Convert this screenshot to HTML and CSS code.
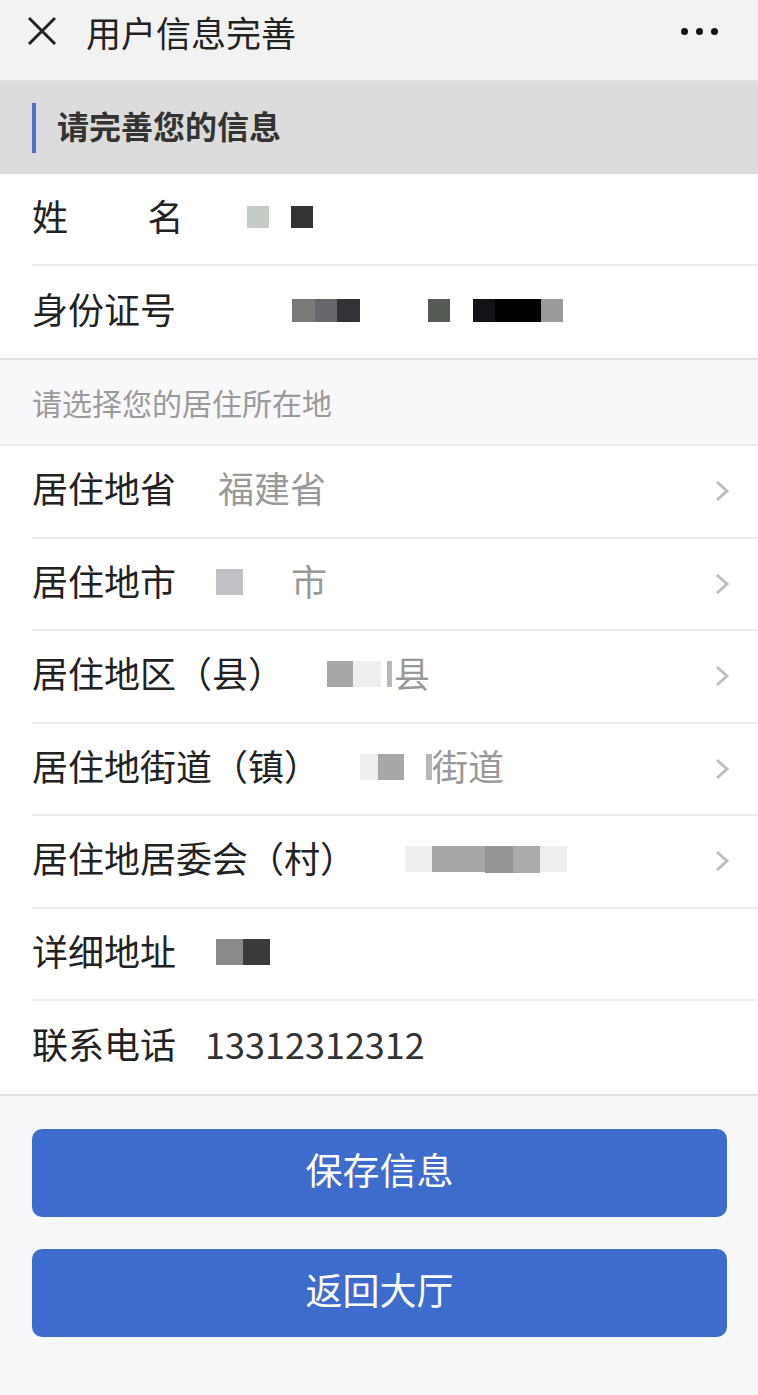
FILE: index.html
```html
<!DOCTYPE html>
<html lang="zh-CN">
<head>
<meta charset="utf-8">
<title>用户信息完善</title>
<link rel="stylesheet" href="styles.css">
</head>
<body>
<header class="topbar">
  <svg class="close" width="30" height="30" viewBox="0 0 30 30"><path d="M2 2 L28 28 M28 2 L2 28" stroke="#222" stroke-width="3" fill="none"/></svg>
  <span class="title">用户信息完善</span>
  <span class="more"><i></i><i></i><i></i></span>
</header>

<div class="section-head"><span class="bar"></span><span class="section-title">请完善您的信息</span></div>

<div class="group">
  <div class="row">
    <span class="label name-label">姓　　名</span>
    <span class="value v-name"><b class="px c1"></b><b class="px c0"></b><b class="px c2"></b></span>
  </div>
  <div class="row last">
    <span class="label">身份证号</span>
    <span class="value v-id"><b class="px c3"></b><b class="px c4"></b><b class="px c5"></b><b class="px c0"></b><b class="px c0"></b><b class="px c0"></b><b class="px c6"></b><b class="px c0"></b><b class="px c7"></b><b class="px c8"></b><b class="px c8"></b><b class="px c9"></b></span>
  </div>
</div>

<div class="subtitle">请选择您的居住所在地</div>

<div class="group address">
  <div class="row">
    <span class="label">居住地省</span>
    <span class="value v-prov">福建省</span>
    <svg class="chev" width="16" height="24" viewBox="0 0 16 24"><polyline points="3,3 13,12 3,21" fill="none" stroke="#bdbdbd" stroke-width="3"/></svg>
  </div>
  <div class="row">
    <span class="label">居住地市</span>
    <span class="value v-city"><b class="px cA"></b><b class="px c0"></b><b class="px c0"></b>市</span>
    <svg class="chev" width="16" height="24" viewBox="0 0 16 24"><polyline points="3,3 13,12 3,21" fill="none" stroke="#bdbdbd" stroke-width="3"/></svg>
  </div>
  <div class="row">
    <span class="label">居住地区（县）</span>
    <span class="value v-county"><b class="px cB"></b><b class="px cL"></b><b class="sliver"></b>县</span>
    <svg class="chev" width="16" height="24" viewBox="0 0 16 24"><polyline points="3,3 13,12 3,21" fill="none" stroke="#bdbdbd" stroke-width="3"/></svg>
  </div>
  <div class="row">
    <span class="label">居住地街道（镇）</span>
    <span class="value v-street"><b class="px cL"></b><b class="px cB"></b><b class="px c0"></b><b class="sliver"></b>街道</span>
    <svg class="chev" width="16" height="24" viewBox="0 0 16 24"><polyline points="3,3 13,12 3,21" fill="none" stroke="#bdbdbd" stroke-width="3"/></svg>
  </div>
  <div class="row">
    <span class="label">居住地居委会（村）</span>
    <span class="value v-village"><b class="px cL"></b><b class="px wide cB"></b><b class="px cC"></b><b class="px cD"></b><b class="px cL"></b></span>
    <svg class="chev" width="16" height="24" viewBox="0 0 16 24"><polyline points="3,3 13,12 3,21" fill="none" stroke="#bdbdbd" stroke-width="3"/></svg>
  </div>
  <div class="row">
    <span class="label">详细地址</span>
    <span class="value v-addr"><b class="px cE"></b><b class="px cF"></b></span>
  </div>
  <div class="row last">
    <span class="label">联系电话</span>
    <span class="value phone">13312312312</span>
  </div>
</div>

<div class="actions">
  <button class="btn">保存信息</button>
  <button class="btn">返回大厅</button>
</div>
</body>
</html>
```

FILE: styles.css
```css
* { box-sizing: border-box; }
body {
  margin: 0;
  background: #f8f7fa;
  font-family: "Noto Sans CJK SC", "Noto Sans", sans-serif;
  color: #222;
}
.topbar {
  height: 82px;
  background: #f2f2f2;
  border-bottom: 2px solid #e0e0e0;
  display: flex;
  align-items: center;
  padding: 0 28px 18px 27px;
}
.close { flex: none; }
.title {
  font-size: 35px;
  margin-left: 29px;
  color: #222;
  flex: 1;
  line-height: 1;
}
.more { display: flex; gap: 8px; margin-right: 12px; }
.more i { width: 7px; height: 7px; border-radius: 50%; background: #111; display: block; }

.section-head {
  height: 92px;
  background: #dcdcdc;
  display: flex;
  align-items: center;
  padding-left: 32px;
}
.bar { width: 4px; height: 50px; background: #4a74c9; }
.section-title {
  margin-left: 21px;
  font-size: 32px;
  font-weight: bold;
  color: #333;
  line-height: 1;
  padding-bottom: 6px;
}

.group {
  background: #fff;
  border-bottom: 2px solid #e4e4e4;
}
.row {
  height: 92px;
  margin-left: 32px;
  border-bottom: 2px solid #ececec;
  display: flex;
  align-items: center;
  padding: 0 28px 8px 0;
}
.address .row { height: 92.5px; }
.row.last { border-bottom: none; }
.chev { flex: none; margin-top: 8px; }
.label { font-size: 36px; color: #222; white-space: nowrap; line-height: 1; }
.name-label { letter-spacing: 2.5px; }
.value {
  font-size: 36px;
  line-height: 1;
  color: #999;
  margin-left: 42px;
  flex: 1;
  display: flex;
  align-items: center;
}
.px { display: block; width: 23px; height: 23px; flex: none; margin-top: 4px; }
.px.wide { width: 53px; }
.sliver { display: block; width: 6px; height: 26px; background: #b8b8b8; flex: none; margin-top: 4px; }
.c0 { background: transparent; }
.c1 { background: #c5ccc5; }
.c2 { background: #333; }
.c3 { background: #777a77; }
.c4 { background: #67666a; }
.c5 { background: #333236; }
.c6 { background: #555a55; }
.c7 { background: #141216; }
.c8 { background: #000; }
.c9 { background: #9a9a9a; }
.cA { background: #c2c0c4; width: 27px; height: 26px; }
.cB { background: #a7a6a9; width: 26px; height: 26px; }
.cC { background: #959496; width: 28px; height: 27px; }
.cD { background: #ababab; width: 27px; height: 27px; }
.cL { background: #eeedef; width: 27px; height: 26px; }
.cE { background: #8a898b; width: 27px; height: 26px; }
.cF { background: #3a393b; width: 27px; height: 26px; }

.v-name { margin-left: 61px; }
.v-name .px { width: 22px; height: 22px; }
.v-id { margin-left: 116px; }
.v-id .px { width: 22.6px; }
.v-city { margin-left: 40px; }
.v-city .c0 { width: 24px; }
.v-county { margin-left: 43px; }
.v-county .cL { width: 28px; margin-right: 6px; }
.v-county .sliver { width: 5px; margin-right: 2px; }
.v-street { margin-left: 40px; }
.v-street .cL { width: 18px; }
.v-street .c0 { width: 22px; }
.v-street .sliver { margin-right: 0; }
.v-village { margin-left: 49px; }
.v-addr { margin-left: 40px; }
.phone { color: #333; margin-left: 29px; }

.subtitle {
  height: 86px;
  display: flex;
  align-items: center;
  padding: 0 0 0 32px;
  font-size: 30px;
  line-height: 1;
  color: #9a9a9a;
  background: #f8f7fa;
  border-bottom: 2px solid #ececec;
}

.actions {
  padding: 33px 31px 0 32px;
  display: flex;
  flex-direction: column;
  gap: 32px;
}
.btn {
  height: 88px;
  border: none;
  border-radius: 10px;
  background: #3d6ccd;
  color: #fff;
  font-family: "Noto Sans CJK SC", sans-serif;
  font-size: 37px;
  line-height: 1;
  padding: 0 0 6px;
}
```
